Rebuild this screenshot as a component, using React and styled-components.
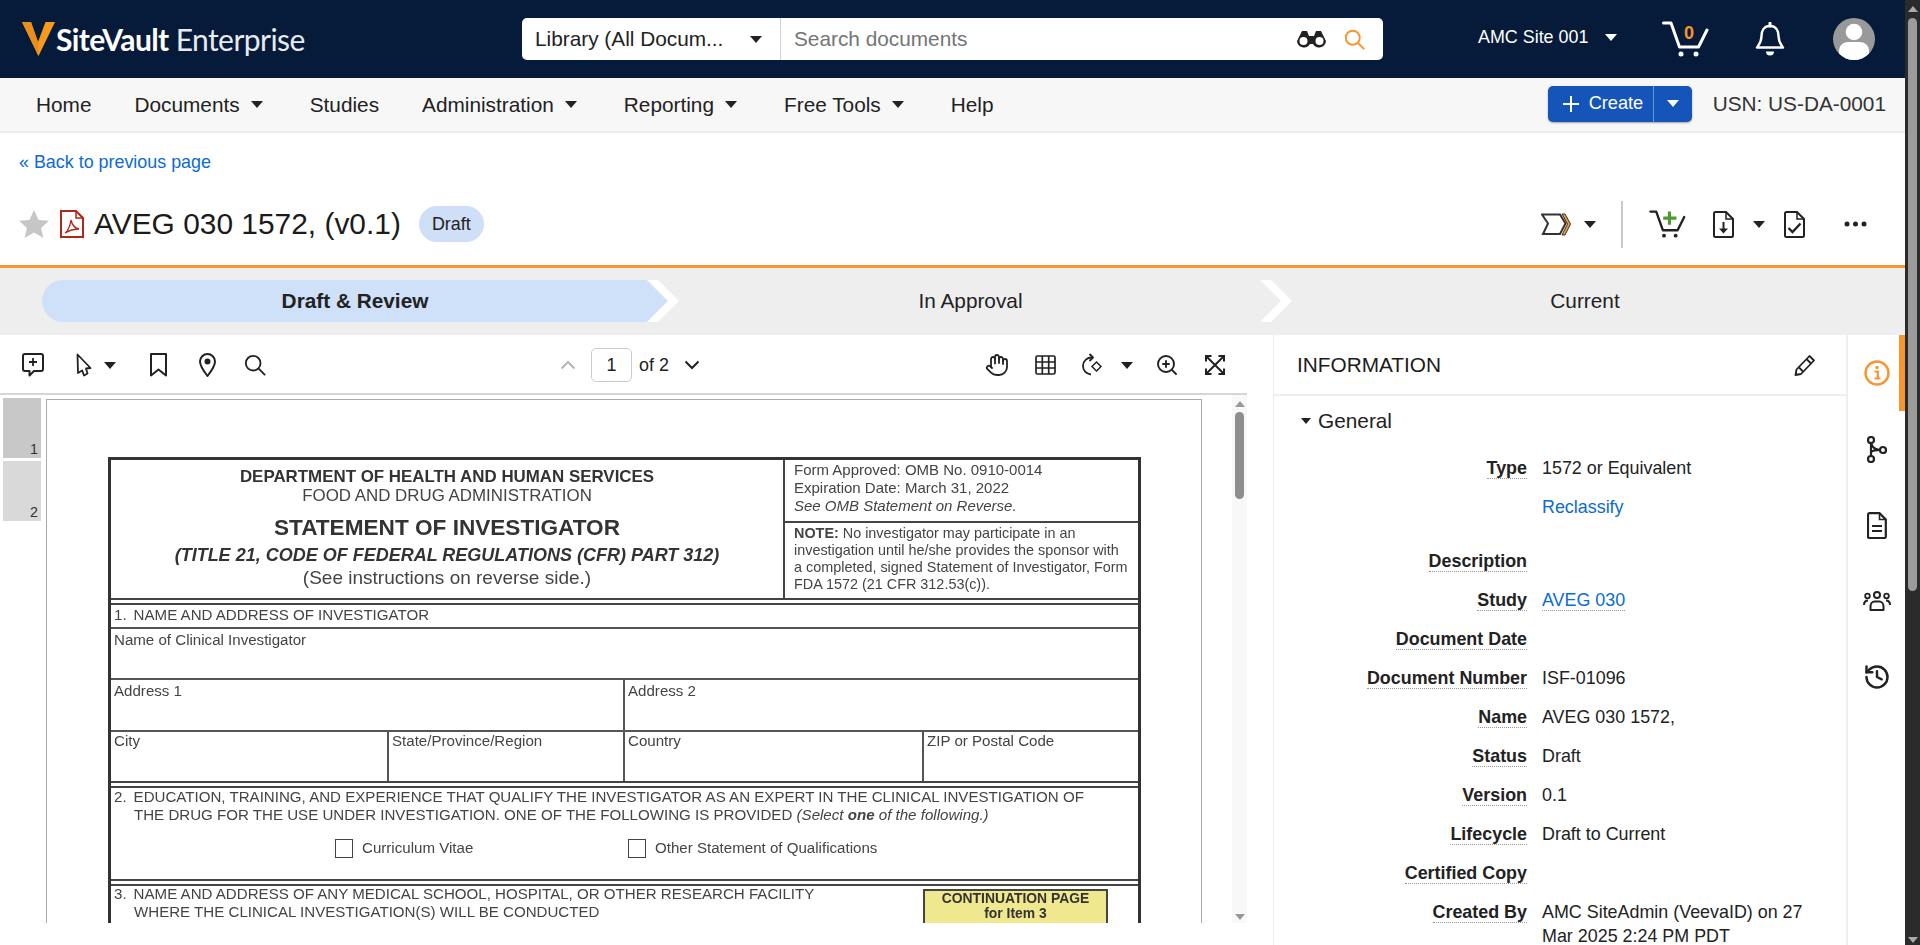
import React from 'react'
import styled, { createGlobalStyle } from 'styled-components'
import { Hand, ZoomIn, History } from 'lucide-react'

const GlobalStyle = createGlobalStyle`
  html, body {
    margin: 0;
    padding: 0;
    height: 100%;
    overflow: hidden;
    background: #fff;
    font-family: "Liberation Sans", Arial, sans-serif;
    color: #222;
  }
  * { box-sizing: border-box; }
`

const Root = styled.div`
  display: flex;
  width: 1920px;
  height: 945px;
  overflow: hidden;
`

const Main = styled.div`
  flex: 1;
  min-width: 0;
  display: flex;
  flex-direction: column;
`

const Scrollbar = styled.div`
  flex: none;
  width: 15px;
  height: ${p => p.$h || '100%'};
  display: flex;
  flex-direction: column;
  align-items: center;
  background: ${p => (p.$dark ? '#2b2b2b' : '#f8f8f8')};
`

const ScrollArrow = styled.div`
  flex: none;
  width: 0;
  height: 0;
  border-left: 5px solid transparent;
  border-right: 5px solid transparent;
  ${p => (p.$down ? 'border-top' : 'border-bottom')}: 6px solid ${p => p.$color};
  margin-top: ${p => p.$top}px;
  margin-bottom: ${p => p.$bottom}px;
`

const ScrollThumb = styled.div`
  flex: none;
  width: 9px;
  height: ${p => p.$h}px;
  border-radius: 5px;
  background: ${p => p.$color};
`

const ScrollSpacer = styled.div`
  flex: 1;
`

/* top bar */
const Header = styled.header`
  flex: none;
  height: 78px;
  background: #061a3a;
  display: flex;
  align-items: center;
`

const Logo = styled.div`
  flex: none;
  width: 522px;
  padding-left: 22px;
  display: flex;
  align-items: center;
  color: #fff;
`

const LogoText = styled.span`
  font-family: Lato, "Open Sans", sans-serif;
  font-size: 30px;
  line-height: 40px;
  margin-left: 1px;
  letter-spacing: -0.6px;
  b { font-weight: 700; }
  span { font-weight: 400; margin-left: 7px; letter-spacing: -0.55px; color: #e8ebf0; }
`

const SearchBox = styled.div`
  flex: none;
  width: 861px;
  height: 42px;
  background: #fff;
  border-radius: 5px;
  display: flex;
  align-items: center;
`

const LibrarySelect = styled.div`
  flex: none;
  width: 259px;
  height: 100%;
  padding: 0 18px 0 13px;
  border-right: 1px solid #ccd2e0;
  display: flex;
  align-items: center;
  justify-content: space-between;
  font-size: 20.8px;
  color: #222;
  white-space: nowrap;
`

const SearchInput = styled.div`
  flex: 1;
  padding-left: 13px;
  font-size: 20.8px;
  color: #757575;
`

const SearchIcons = styled.div`
  display: flex;
  align-items: center;
  gap: 17px;
  padding-right: 18px;
`

const HeaderRight = styled.div`
  flex: 1;
  display: flex;
  align-items: center;
  padding-left: 95px;
  color: #fff;
`

const SiteName = styled.div`
  display: flex;
  align-items: center;
  gap: 17px;
  font-size: 17.9px;
  width: 184px;
  margin-top: -3px;
`

const CartWrap = styled.div`
  position: relative;
  width: 47px;
  height: 36px;
  margin-right: 46px;
`

const CartCount = styled.span`
  position: absolute;
  left: 22px;
  top: ${p => p.$top || 2}px;
  font-size: 18px;
  font-weight: 700;
  color: #f7962e;
`

const Avatar = styled.div`
  width: 42px;
  height: 42px;
  margin-left: 48px;
  border-radius: 50%;
  background: #999;
  overflow: hidden;
  svg { display: block; }
`

const Caret = styled.span`
  flex: none;
  display: inline-block;
  width: 0;
  height: 0;
  border-left: ${p => p.$size || 6.5}px solid transparent;
  border-right: ${p => p.$size || 6.5}px solid transparent;
  border-top: ${p => (p.$size || 6.5) + 0.5}px solid ${p => p.$color || '#222'};
`

/* nav */
const Nav = styled.nav`
  flex: none;
  height: 55px;
  background: #f7f7f7;
  border-bottom: 2px solid #ececec;
  display: flex;
  align-items: center;
  padding-left: 36px;
  padding-right: 19px;
  gap: 43px;
`

const NavItem = styled.div`
  display: flex;
  align-items: center;
  gap: 11px;
  font-size: 20.8px;
  color: #222;
  margin-right: ${p => (p.$menu ? 4 : 0)}px;
`

const NavRight = styled.div`
  margin-left: auto;
  display: flex;
  align-items: center;
  gap: 21px;
  margin-top: -2px;
`

const CreateButton = styled.div`
  display: flex;
  align-items: stretch;
  width: 144px;
  height: 36px;
  border-radius: 5px;
  background: #1554b9;
  box-shadow: 0 1px 2px rgba(0, 0, 0, 0.35);
  color: #fff;
  font-size: 18.2px;
`

const CreateLabel = styled.div`
  width: 106px;
  border-right: 1px solid #6f93cf;
  display: flex;
  align-items: center;
  padding-left: 15px;
  gap: 10px;
`

const CreateMenu = styled.div`
  flex: 1;
  display: flex;
  align-items: center;
  justify-content: center;
`

const Usn = styled.div`
  font-size: 20.8px;
  color: #333;
`

/* title */
const BackLine = styled.div`
  flex: none;
  height: 60px;
  padding: 18px 0 0 19px;
  font-size: 17.9px;
  line-height: 23px;
  color: #0c6bd1;
`

const TitleRow = styled.div`
  flex: none;
  height: 75px;
  display: flex;
  align-items: center;
  padding: 0 38px 10px 19px;
  border-bottom: 3px solid #f7962e;
`

const Title = styled.h1`
  margin: 0 18px 0 10px;
  font-size: 29.9px;
  font-weight: 400;
  color: #1b1b1b;
`

const Badge = styled.span`
  width: 65px;
  height: 36px;
  border-radius: 18px;
  background: #cfdff8;
  display: flex;
  align-items: center;
  justify-content: center;
  font-size: 17.9px;
  color: #222;
`

const TitleIcons = styled.div`
  margin-left: auto;
  display: flex;
  align-items: center;
`

const IconSlot = styled.span`
  display: flex;
  align-items: center;
  margin-left: ${p => p.$ml || 0}px;
  svg { display: block; }
`

const Divider = styled.span`
  width: 2px;
  height: 47px;
  background: #c9c9c9;
  margin: 0 26px 0 25px;
`

/* lifecycle stepper */
const Stepper = styled.div`
  flex: none;
  height: 67px;
  background: #eee;
  padding: 12px 0 13px 42px;
  display: grid;
  grid-template-columns: 626px 613px 1fr;
`

const Step = styled.div`
  position: relative;
  display: flex;
  align-items: center;
  justify-content: center;
  padding-right: ${p => p.$pr || 0}px;
  font-size: 20.8px;
  font-weight: ${p => (p.$active ? 700 : 400)};
  color: #222;
  &::before {
    content: '';
    display: ${p => (p.$active ? 'block' : 'none')};
    position: absolute;
    inset: 0;
    border-radius: 22px 0 0 22px;
    background: #cfe0f9;
    clip-path: polygon(0 0, calc(100% - 21px) 0, 100% 50%, calc(100% - 21px) 100%, 0 100%);
  }
  &::after {
    content: '';
    display: ${p => (p.$last ? 'none' : 'block')};
    position: absolute;
    top: 0;
    bottom: 0;
    right: -11px;
    width: 32px;
    background: #fff;
    clip-path: polygon(0 0, 11px 0, 100% 50%, 11px 100%, 0 100%, 21px 50%);
  }
`

const StepLabel = styled.span`
  position: relative;
`

/* work area */
const Workspace = styled.div`
  flex: 1;
  min-height: 0;
  display: flex;
`

const Viewer = styled.section`
  flex: none;
  width: 1274px;
  padding-right: 26px;
  border-right: 1px solid #eee;
  display: flex;
  flex-direction: column;
`

const ViewerBar = styled.div`
  flex: none;
  height: 60px;
  border-bottom: 2px solid #d6d6d6;
  display: flex;
  align-items: center;
  padding: 2px 22px 0 22px;
`

const BarLeft = styled.div`
  flex: none;
  width: 535px;
  display: flex;
  align-items: center;
`

const Pager = styled.div`
  display: flex;
  align-items: center;
  font-size: 17.9px;
  color: #222;
`

const PageInput = styled.span`
  width: 41px;
  height: 34px;
  margin: 0 7px 0 15px;
  border: 1px solid #ccc;
  border-radius: 5px;
  display: flex;
  align-items: center;
  justify-content: center;
`

const BarRight = styled.div`
  margin-left: auto;
  display: flex;
  align-items: center;
`

const DocArea = styled.div`
  flex: none;
  height: 528px;
  display: flex;
  overflow: hidden;
`

const Thumbs = styled.div`
  flex: none;
  width: 46px;
  padding: 3px 5px 0 3px;
  display: flex;
  flex-direction: column;
  gap: 3px;
`

const Thumb = styled.div`
  height: 60px;
  background: ${p => (p.$active ? '#c8c8c8' : '#d9d9d9')};
  display: flex;
  align-items: flex-end;
  justify-content: flex-end;
  padding: 0 3px 0 0;
  font-size: 14.3px;
  line-height: 18px;
  color: #333;
`

const PageSheet = styled.div`
  flex: none;
  width: 1156px;
  margin-top: 4px;
  padding: 57px 0 0 61px;
  border: 1px solid #aaa;
  border-bottom: none;
`

const Form = styled.div`
  width: 1033px;
  border: 3px solid #333;
  border-bottom: none;
  color: #444;
  filter: blur(0.3px);
`

const FormTop = styled.div`
  display: flex;
  height: 138px;
`

const AgencyCell = styled.div`
  flex: none;
  width: 674px;
  border-right: 2px solid #444;
  display: flex;
  flex-direction: column;
  align-items: center;
  padding-top: 7px;
  white-space: nowrap;
`

const AgencyLine = styled.div`
  font-size: ${p => p.$fs}px;
  line-height: ${p => p.$lh}px;
  font-weight: ${p => (p.$b ? 700 : 400)};
  font-style: ${p => (p.$i ? 'italic' : 'normal')};
  margin-top: ${p => p.$mt || 0}px;
  color: ${p => (p.$b ? '#333' : '#444')};
`

const ApprovalCol = styled.div`
  flex: 1;
  display: flex;
  flex-direction: column;
`

const ApprovalCell = styled.div`
  flex: none;
  height: 63px;
  padding: 1px 0 0 9px;
  border-bottom: 2px solid #444;
  font-size: 15px;
  line-height: 18px;
  white-space: nowrap;
`

const NoteCell = styled.div`
  flex: 1;
  padding: 1.5px 0 0 9px;
  font-size: 14.4px;
  line-height: 17.2px;
  white-space: nowrap;
`

const DoubleRule = styled.div`
  height: 7px;
  border-top: 2px solid #444;
  border-bottom: 2px solid #444;
`

const FormRow = styled.div`
  display: flex;
  height: ${p => p.$h}px;
  border-bottom: ${p => (p.$noRule ? 'none' : '2px solid #555')};
`

const FormCell = styled.div`
  flex: ${p => (p.$w ? 'none' : '1')};
  width: ${p => (p.$w ? `${p.$w}px` : 'auto')};
  padding: ${p => p.$pt ?? 1}px 0 0 3px;
  border-right: ${p => (p.$rule ? '2px solid #555' : 'none')};
  font-size: 15.1px;
  line-height: 18px;
  white-space: nowrap;
`

const SectionLine = styled.div`
  padding-left: ${p => p.$indent || 0}px;
  font-size: 15.1px;
  line-height: 18.4px;
  white-space: nowrap;
  span { margin-right: 7px; }
`

const ChoiceRow = styled.div`
  display: flex;
  align-items: center;
  padding: 14px 0 0 221px;
`

const CheckBox = styled.span`
  flex: none;
  width: 18px;
  height: 19px;
  border: 1.5px solid #444;
`

const ChoiceLabel = styled.span`
  width: 266px;
  margin-left: 9px;
  font-size: 15.1px;
`

const ContinuationRow = styled.div`
  display: flex;
  justify-content: space-between;
  margin-top: -1px;
  padding-right: 30px;
`

const ContinuationBox = styled.div`
  width: 185px;
  height: 46px;
  margin-top: 4px;
  border: 2px solid #444;
  background: #f0e88e;
  font-size: 13.9px;
  line-height: 15.4px;
  font-weight: 700;
  text-align: center;
  padding-top: 0;
  color: #333;
`

const DocGutter = styled.div`
  flex: 1;
`

/* information panel */
const InfoPanel = styled.aside`
  flex: none;
  width: 572px;
  display: flex;
  flex-direction: column;
  overflow: hidden;
`

const InfoHeader = styled.div`
  flex: none;
  height: 61px;
  border-bottom: 2px solid #eee;
  display: flex;
  align-items: center;
  justify-content: space-between;
  padding: 0 30px 0 23px;
  font-size: 20.8px;
  color: #1b1b1b;
`

const SectionTitle = styled.div`
  display: flex;
  align-items: center;
  gap: 7px;
  padding: 13px 0 0 27px;
  font-size: 20.8px;
  line-height: 24px;
  color: #222;
`

const InfoRows = styled.div`
  padding-top: 24px;
`

const InfoRow = styled.div`
  display: flex;
  align-items: flex-start;
  padding-bottom: ${p => p.$pb || 15.6}px;
  font-size: 17.9px;
  line-height: 23.4px;
`

const InfoLabel = styled.div`
  flex: none;
  width: 253px;
  text-align: right;
  font-weight: 700;
  color: #222;
  span {
    display: inline-block;
    line-height: 20px;
    border-bottom: 1px dotted #999;
  }
`

const InfoValue = styled.div`
  width: 285px;
  margin-left: 15px;
  color: #222;
`

const ValueLink = styled.span`
  display: ${p => (p.$underline ? 'inline-block' : 'block')};
  line-height: ${p => (p.$underline ? '20px' : '23.4px')};
  margin-top: ${p => p.$mt || 0}px;
  color: #0c6bd1;
  border-bottom: ${p => (p.$underline ? '1px dotted #999' : 'none')};
`

const SideTabs = styled.div`
  flex: 1;
  border-left: 2px solid #eee;
  display: flex;
  flex-direction: column;
`

const SideTab = styled.div`
  flex: none;
  height: 76px;
  display: flex;
  align-items: center;
  justify-content: center;
  box-shadow: ${p => (p.$active ? 'inset -6px 0 0 #f7962e' : 'none')};
  svg { display: block; }
`

/* drawn icons */
const LogoMark = () => (
  <svg width="33" height="34" viewBox="0 0 33 34">
    <polygon points="0,0 33,0 16.5,34" fill="#f89a1c" />
    <polygon points="9,0 23.5,0 16,20" fill="#061a3a" />
    <polygon points="9,0 16,20 16.5,34 0,0" fill="#e98e1a" />
  </svg>
)

const BinocularsIcon = () => (
  <svg width="31" height="18" viewBox="0 0 31 18">
    <path d="M6 1h5l2 5h5l2-5h5l5 10a7 7 0 0 1-13 3h-3a7 7 0 0 1-13-3z" fill="#222" />
    <circle cx="7.5" cy="11" r="4" fill="#fff" />
    <circle cx="23.5" cy="11" r="4" fill="#fff" />
  </svg>
)

const SearchIcon = ({ size = 24, color = '#222', sw = 2 }) => (
  <svg width={size} height={size} viewBox="0 0 24 24" fill="none" stroke={color} strokeWidth={sw} strokeLinecap="round">
    <circle cx="10" cy="10" r="8" />
    <path d="M16 16l6.5 6.5" />
  </svg>
)

const CartIcon = ({ color, width, height, plus }) => (
  <svg width={width} height={height} viewBox="0 0 47 36" fill="none" stroke={color} strokeWidth="3" strokeLinecap="round" strokeLinejoin="round">
    <path d="M1.5 2H9l8.500 24h19L45 9" />
    <circle cx="19" cy="33" r="2.500" fill={color} stroke="none" />
    <circle cx="34" cy="33" r="2.500" fill={color} stroke="none" />
    {plus && <path d="M26 2v17M18 10.500h17" stroke="#4f9a2f" strokeWidth="4" strokeLinecap="butt" />}
  </svg>
)

const BellIcon = () => (
  <svg width="30" height="34" viewBox="0 0 30 34" fill="none" stroke="#fff" strokeWidth="2.400" strokeLinejoin="round">
    <path d="M15 1v3" strokeLinecap="round" strokeWidth="3" />
    <path d="M15 4c-6 0-8.500 4.500-8.500 10 0 6-2 8-4.500 11.500h26C25.500 22 23.500 20 23.500 14 23.500 8.500 21 4 15 4z" />
    <path d="M11 29.500h8a4 4 0 0 1-8 0z" fill="#fff" stroke="none" />
  </svg>
)

const AvatarFigure = () => (
  <svg width="42" height="42" viewBox="0 0 42 42" fill="#fff">
    <circle cx="21" cy="14" r="8.300" />
    <path d="M6 42V33c0-6 5-9 9-9h12c4 0 9 3 9 9v9z" />
  </svg>
)

const PlusIcon = () => (
  <svg width="16" height="16" viewBox="0 0 16 16" stroke="#fff" strokeWidth="2">
    <path d="M8 0v16M0 8h16" />
  </svg>
)

const StarIcon = () => (
  <svg width="30" height="28" viewBox="0 0 30 28">
    <polygon points="15,0 19.500,10 30,10.800 22,18 24.500,28 15,22.500 5.500,28 8,18 0,10.800 10.500,10" fill="#c6c6c6" />
  </svg>
)

const PdfIcon = () => (
  <svg width="24" height="28" viewBox="0 0 24 28" fill="none" stroke="#b3261a" strokeWidth="2">
    <path d="M1 1h15l7 7v19H1z" />
    <path d="M16 1v7h7" strokeWidth="1.500" />
    <path d="M5 23c3-2 5-7 6-13 1 5 4 8 8 9-5 0-9 1-14 4z" strokeWidth="1.300" />
  </svg>
)

const LifecycleIcon = () => (
  <svg width="32" height="23" viewBox="0 0 32 23" fill="none" strokeWidth="2" strokeLinejoin="miter">
    <path d="M1 1.500h18l5.500 9-5.500 10.500H2l5-10.500z" stroke="#333" />
    <path d="M24 1l5.500 10L24 22h-3l5.500-11L21 1z" fill="#f7962e" stroke="#333" strokeWidth="1" />
  </svg>
)

const DocDownIcon = () => (
  <svg width="21" height="27" viewBox="0 0 21 27" fill="none" stroke="#222" strokeWidth="2">
    <path d="M2.500 1H13l7 7v16.500a1.500 1.500 0 0 1-1.500 1.500h-16A1.500 1.500 0 0 1 1 24.500v-22A1.500 1.500 0 0 1 2.500 1z" />
    <path d="M13 1v7h7" strokeWidth="1.500" />
    <path d="M10.500 11v9" />
    <path d="M6 17.500h9l-4.500 5z" fill="#222" stroke="none" />
  </svg>
)

const DocCheckIcon = () => (
  <svg width="21" height="27" viewBox="0 0 21 27" fill="none" stroke="#222" strokeWidth="2">
    <path d="M2.500 1H13l7 7v16.500a1.500 1.500 0 0 1-1.500 1.500h-16A1.500 1.500 0 0 1 1 24.500v-22A1.500 1.500 0 0 1 2.500 1z" />
    <path d="M13 1v7h7" strokeWidth="1.500" />
    <path d="M4.500 17l4 4 8-8.500" strokeWidth="2.400" />
  </svg>
)

const DotsIcon = () => (
  <svg width="23" height="6" viewBox="0 0 23 6" fill="#222">
    <circle cx="3" cy="3" r="2.500" />
    <circle cx="11.500" cy="3" r="2.500" />
    <circle cx="20" cy="3" r="2.500" />
  </svg>
)

const CommentPlusIcon = () => (
  <svg width="22" height="24" viewBox="0 0 22 24" fill="none" stroke="#222" strokeWidth="2" strokeLinejoin="round">
    <path d="M3 1h16a2 2 0 0 1 2 2v13a2 2 0 0 1-2 2h-7l-4.500 4.500V18H3a2 2 0 0 1-2-2V3a2 2 0 0 1 2-2z" />
    <path d="M11 5v8M7 9h8" strokeWidth="1.800" />
  </svg>
)

const PointerIcon = () => (
  <svg width="16" height="24" viewBox="0 0 16 24" fill="none" stroke="#222" strokeWidth="1.800" strokeLinejoin="round">
    <path d="M1.500 1.500l13 13.500-4.500.5 1.500 5-3.500 2-1.800-5L2 20z" />
  </svg>
)

const BookmarkIcon = () => (
  <svg width="17" height="24" viewBox="0 0 17 24" fill="none" stroke="#222" strokeWidth="2" strokeLinejoin="round">
    <path d="M1 1h15v21.500l-7.500-6-7.500 6z" />
  </svg>
)

const PinIcon = () => (
  <svg width="17" height="24" viewBox="0 0 17 24" fill="none" stroke="#222" strokeWidth="2">
    <path d="M8.500 1A7.500 7.500 0 0 0 1 8.500C1 13.500 8.500 23 8.500 23S16 13.500 16 8.500A7.500 7.500 0 0 0 8.500 1z" />
    <circle cx="8.500" cy="8.500" r="3" fill="#222" stroke="none" />
  </svg>
)

const ChevronIcon = ({ up, color }) => (
  <svg width="16" height="10" viewBox="0 0 16 10" fill="none" stroke={color} strokeWidth="2">
    <path d={up ? 'M1.500 8.500L8 2l6.500 6.500' : 'M1.500 1.500L8 8l6.500-6.500'} />
  </svg>
)

const TableIcon = () => (
  <svg width="21" height="20" viewBox="0 0 21 20" fill="none" stroke="#222" strokeWidth="1.700">
    <rect x="1" y="1" width="19" height="18" rx="1.500" />
    <path d="M7.300 1v18M13.700 1v18M1 7h19M1 13h19" />
  </svg>
)

const RotateIcon = () => (
  <svg width="20" height="24" viewBox="0 0 20 24" fill="none" stroke="#222" strokeWidth="1.800">
    <path d="M10 4.500a8.500 8.500 0 0 0-1 17" />
    <path d="M7.500 1l3.500 3.500L7.500 8" strokeLinejoin="round" />
    <path d="M14.500 9l4.500 4.500-4.500 4.500L10 13.500z" strokeWidth="1.500" />
  </svg>
)

const ExpandIcon = () => (
  <svg width="20" height="20" viewBox="0 0 20 20" fill="none" stroke="#222" strokeWidth="2">
    <path d="M1 6.500V1h5.500M13.500 1H19v5.500M19 13.500V19h-5.500M6.500 19H1v-5.500" />
    <path d="M1.500 1.500l17 17M18.500 1.500l-17 17" />
  </svg>
)

const PencilIcon = () => (
  <svg width="22" height="22" viewBox="0 0 22 22" fill="none" stroke="#222" strokeWidth="1.800" strokeLinejoin="round">
    <path d="M15.500 2l4.500 4.500L7 20l-5.500 1 1-5.500z" />
    <path d="M12.500 5l4.500 4.500M5 13.500l4 4" />
  </svg>
)

const InfoIcon = () => (
  <svg width="26" height="26" viewBox="0 0 26 26" fill="none" stroke="#f7962e" strokeWidth="2.400">
    <circle cx="13" cy="13" r="11.500" />
    <circle cx="13" cy="7.500" r="1.700" fill="#f7962e" stroke="none" />
    <path d="M10.500 11.500h3.300v7M10.500 18.500h6" strokeWidth="2.200" />
  </svg>
)

const BranchIcon = () => (
  <svg width="20" height="27" viewBox="0 0 20 27" fill="none" stroke="#222" strokeWidth="2.200">
    <circle cx="4" cy="4" r="3" />
    <circle cx="4" cy="23" r="3" />
    <circle cx="16" cy="14" r="3" />
    <path d="M4 7v13M4.500 8c1 4 4 5.500 8.500 6M4 16c1-1 3-2 9-2" />
  </svg>
)

const DocLinesIcon = () => (
  <svg width="20" height="27" viewBox="0 0 20 27" fill="none" stroke="#222" strokeWidth="2.200">
    <path d="M2.500 1.200H12.500l6.300 6.300v17a1.500 1.500 0 0 1-1.500 1.500H2.500A1.500 1.500 0 0 1 1 24.500v-22A1.500 1.500 0 0 1 2.500 1.200z" />
    <path d="M12.500 1.200v6.300h6.300" strokeWidth="1.600" />
    <path d="M5 14h10M5 19h10" />
  </svg>
)

const PeopleIcon = () => (
  <svg width="28" height="20" viewBox="0 0 28 20" fill="none" stroke="#222" strokeWidth="2">
    <circle cx="14" cy="4" r="3" />
    <circle cx="4.500" cy="5" r="2.300" strokeWidth="1.800" />
    <circle cx="23.500" cy="5" r="2.300" strokeWidth="1.800" />
    <path d="M7.500 19v-3.500c0-3 2-5 4-5h5c2 0 4 2 4 5V19z" strokeLinejoin="round" />
    <path d="M1 14c0-3 1.500-4.500 4-4.500M27 14c0-3-1.500-4.500-4-4.500" />
  </svg>
)

const navItems = [
  { label: 'Home' },
  { label: 'Documents', menu: true },
  { label: 'Studies' },
  { label: 'Administration', menu: true },
  { label: 'Reporting', menu: true },
  { label: 'Free Tools', menu: true },
  { label: 'Help' },
]

const infoRows = [
  { label: 'Description' },
  { label: 'Study', link: 'AVEG 030' },
  { label: 'Document Date' },
  { label: 'Document Number', value: 'ISF-01096' },
  { label: 'Name', value: 'AVEG 030 1572,' },
  { label: 'Status', value: 'Draft' },
  { label: 'Version', value: '0.1' },
  { label: 'Lifecycle', value: 'Draft to Current' },
  { label: 'Certified Copy' },
  { label: 'Created By', value: 'AMC SiteAdmin (VeevaID) on 27 Mar 2025 2:24 PM PDT' },
]

const InvestigatorForm = () => (
  <Form>
    <FormTop>
      <AgencyCell>
        <AgencyLine $fs={16.9} $lh={19} $b>DEPARTMENT OF HEALTH AND HUMAN SERVICES</AgencyLine>
        <AgencyLine $fs={16.9} $lh={19}>FOOD AND DRUG ADMINISTRATION</AgencyLine>
        <AgencyLine $fs={22.6} $lh={26} $b $mt={10}>STATEMENT OF INVESTIGATOR</AgencyLine>
        <AgencyLine $fs={18} $lh={20} $b $i $mt={4}>(TITLE 21, CODE OF FEDERAL REGULATIONS (CFR) PART 312)</AgencyLine>
        <AgencyLine $fs={19} $lh={20} $mt={3}>(See instructions on reverse side.)</AgencyLine>
      </AgencyCell>
      <ApprovalCol>
        <ApprovalCell>
          Form Approved: OMB No. 0910-0014<br />
          Expiration Date: March 31, 2022<br />
          <i>See OMB Statement on Reverse.</i>
        </ApprovalCell>
        <NoteCell>
          <b>NOTE:</b> No investigator may participate in an<br />
          investigation until he/she provides the sponsor with<br />
          a completed, signed Statement of Investigator, Form<br />
          FDA 1572 (21 CFR 312.53(c)).
        </NoteCell>
      </ApprovalCol>
    </FormTop>
    <DoubleRule />
    <FormRow $h={24}>
      <FormCell><SectionLine><span>1.</span>NAME AND ADDRESS OF INVESTIGATOR</SectionLine></FormCell>
    </FormRow>
    <FormRow $h={51}>
      <FormCell $pt={2}>Name of Clinical Investigator</FormCell>
    </FormRow>
    <FormRow $h={52}>
      <FormCell $w={514} $rule $pt={2}>Address 1</FormCell>
      <FormCell $pt={2}>Address 2</FormCell>
    </FormRow>
    <FormRow $h={49} $noRule>
      <FormCell $w={278} $rule $pt={0}>City</FormCell>
      <FormCell $w={236} $rule $pt={0}>State/Province/Region</FormCell>
      <FormCell $w={299} $rule $pt={0}>Country</FormCell>
      <FormCell $pt={0}>ZIP or Postal Code</FormCell>
    </FormRow>
    <DoubleRule />
    <FormRow $h={91} $noRule>
      <FormCell $pt={0}>
        <SectionLine><span>2.</span>EDUCATION, TRAINING, AND EXPERIENCE THAT QUALIFY THE INVESTIGATOR AS AN EXPERT IN THE CLINICAL INVESTIGATION OF</SectionLine>
        <SectionLine $indent={20}>THE DRUG FOR THE USE UNDER INVESTIGATION. ONE OF THE FOLLOWING IS PROVIDED <i>(Select <b>one</b> of the following.)</i></SectionLine>
        <ChoiceRow>
          <CheckBox />
          <ChoiceLabel>Curriculum Vitae</ChoiceLabel>
          <CheckBox />
          <ChoiceLabel>Other Statement of Qualifications</ChoiceLabel>
        </ChoiceRow>
      </FormCell>
    </FormRow>
    <DoubleRule />
    <ContinuationRow>
      <FormCell $pt={0}>
        <SectionLine><span>3.</span>NAME AND ADDRESS OF ANY MEDICAL SCHOOL, HOSPITAL, OR OTHER RESEARCH FACILITY</SectionLine>
        <SectionLine $indent={20}>WHERE THE CLINICAL INVESTIGATION(S) WILL BE CONDUCTED</SectionLine>
      </FormCell>
      <ContinuationBox>CONTINUATION PAGE<br />for Item 3</ContinuationBox>
    </ContinuationRow>
  </Form>
)

export default function App() {
  return (
    <Root>
      <GlobalStyle />
      <Main>
        <Header>
          <Logo>
            <LogoMark />
            <LogoText><b>SiteVault</b><span>Enterprise</span></LogoText>
          </Logo>
          <SearchBox>
            <LibrarySelect>
              <span>Library (All Docum...</span>
              <Caret />
            </LibrarySelect>
            <SearchInput>Search documents</SearchInput>
            <SearchIcons>
              <BinocularsIcon />
              <SearchIcon size={21} color="#f7962e" sw={2.2} />
            </SearchIcons>
          </SearchBox>
          <HeaderRight>
            <SiteName>AMC Site 001 <Caret $color="#fff" /></SiteName>
            <CartWrap>
              <CartIcon color="#fff" width={47} height={36} />
              <CartCount>0</CartCount>
            </CartWrap>
            <BellIcon />
            <Avatar><AvatarFigure /></Avatar>
          </HeaderRight>
        </Header>
        <Nav>
          {navItems.map(item => (
            <NavItem key={item.label} $menu={item.menu}>
              {item.label}
              {item.menu && <Caret />}
            </NavItem>
          ))}
          <NavRight>
            <CreateButton>
              <CreateLabel><PlusIcon /> Create</CreateLabel>
              <CreateMenu><Caret $color="#fff" /></CreateMenu>
            </CreateButton>
            <Usn>USN: US-DA-0001</Usn>
          </NavRight>
        </Nav>
        <BackLine>« Back to previous page</BackLine>
        <TitleRow>
          <StarIcon />
          <IconSlot $ml={11}><PdfIcon /></IconSlot>
          <Title>AVEG 030 1572, (v0.1)</Title>
          <Badge>Draft</Badge>
          <TitleIcons>
            <LifecycleIcon />
            <IconSlot $ml={11}><Caret /></IconSlot>
            <Divider />
            <CartIcon color="#222" width={37} height={28} plus />
            <IconSlot $ml={27}><DocDownIcon /></IconSlot>
            <IconSlot $ml={19}><Caret /></IconSlot>
            <IconSlot $ml={19}><DocCheckIcon /></IconSlot>
            <IconSlot $ml={39}><DotsIcon /></IconSlot>
          </TitleIcons>
        </TitleRow>
        <Stepper>
          <Step $active><StepLabel>Draft &amp; Review</StepLabel></Step>
          <Step $pr={8}><StepLabel>In Approval</StepLabel></Step>
          <Step $last $pr={16}><StepLabel>Current</StepLabel></Step>
        </Stepper>
        <Workspace>
          <Viewer>
            <ViewerBar>
              <BarLeft>
                <CommentPlusIcon />
                <IconSlot $ml={32}><PointerIcon /></IconSlot>
                <IconSlot $ml={12}><Caret /></IconSlot>
                <IconSlot $ml={34}><BookmarkIcon /></IconSlot>
                <IconSlot $ml={32}><PinIcon /></IconSlot>
                <IconSlot $ml={28}><SearchIcon size={22} /></IconSlot>
              </BarLeft>
              <Pager>
                <IconSlot $ml={3}><ChevronIcon up color="#b5b5b5" /></IconSlot>
                <PageInput>1</PageInput>
                of 2
                <IconSlot $ml={15}><ChevronIcon color="#222" /></IconSlot>
              </Pager>
              <BarRight>
                <Hand size={24} color="#222" strokeWidth={1.8} />
                <IconSlot $ml={26}><TableIcon /></IconSlot>
                <IconSlot $ml={26}><RotateIcon /></IconSlot>
                <IconSlot $ml={19}><Caret /></IconSlot>
                <IconSlot $ml={22}><ZoomIn size={24} color="#222" strokeWidth={1.9} /></IconSlot>
                <IconSlot $ml={26}><ExpandIcon /></IconSlot>
              </BarRight>
            </ViewerBar>
            <DocArea>
              <Thumbs>
                <Thumb $active>1</Thumb>
                <Thumb>2</Thumb>
              </Thumbs>
              <PageSheet><InvestigatorForm /></PageSheet>
              <DocGutter />
              <Scrollbar>
                <ScrollArrow $color="#999" $top={6} $bottom={5} />
                <ScrollThumb $h={87} $color="#8e8e8e" />
                <ScrollSpacer />
                <ScrollArrow $down $color="#999" $top={0} $bottom={3} />
              </Scrollbar>
            </DocArea>
          </Viewer>
          <InfoPanel>
            <InfoHeader>
              INFORMATION
              <PencilIcon />
            </InfoHeader>
            <SectionTitle><Caret $size={5.5} />General</SectionTitle>
            <InfoRows>
              <InfoRow $pb={31}>
                <InfoLabel><span>Type</span></InfoLabel>
                <InfoValue>
                  1572 or Equivalent
                  <ValueLink $mt={15.6}>Reclassify</ValueLink>
                </InfoValue>
              </InfoRow>
              {infoRows.map(row => (
                <InfoRow key={row.label}>
                  <InfoLabel><span>{row.label}</span></InfoLabel>
                  <InfoValue>
                    {row.link ? <ValueLink $underline>{row.link}</ValueLink> : row.value}
                  </InfoValue>
                </InfoRow>
              ))}
            </InfoRows>
          </InfoPanel>
          <SideTabs>
            <SideTab $active><InfoIcon /></SideTab>
            <SideTab><BranchIcon /></SideTab>
            <SideTab><DocLinesIcon /></SideTab>
            <SideTab><PeopleIcon /></SideTab>
            <SideTab><History size={28} color="#222" strokeWidth={2.1} /></SideTab>
          </SideTabs>
        </Workspace>
      </Main>
      <Scrollbar $dark>
        <ScrollArrow $color="#aaa" $top={6} $bottom={6} />
        <ScrollThumb $h={573} $color="#9b9b9b" />
        <ScrollSpacer />
        <ScrollArrow $down $color="#aaa" $top={0} $bottom={2} />
      </Scrollbar>
    </Root>
  )
}
